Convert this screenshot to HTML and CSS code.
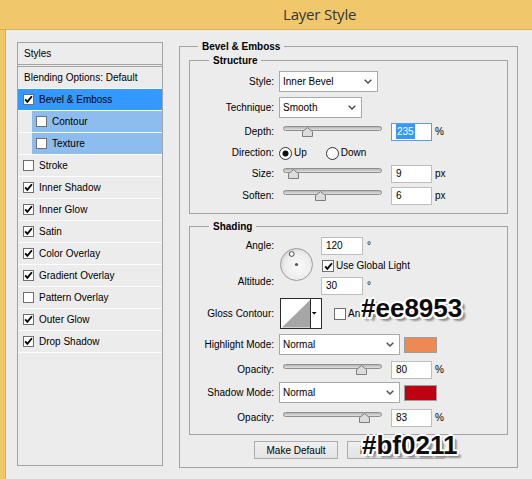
FILE: index.html
```html
<!DOCTYPE html>
<html lang="en">
<head>
<meta charset="utf-8">
<title>Layer Style</title>
<link rel="stylesheet" href="styles.css">
</head>
<body>
<header class="titlebar">Layer Style</header>
<div class="window">
  <nav class="styles-panel">
    <div class="sp-head">Styles</div>
    <div class="sp-row sp-blend">Blending Options: Default</div>
    <div class="sp-row sp-active"><span class="cb"><svg class="tick" viewBox="0 0 9 9"><path d="M1.2 4.4 3.4 6.9 7.9 1.2"/></svg></span>Bevel &amp; Emboss</div>
    <div class="sp-row sp-sub"><span class="cb"></span>Contour</div>
    <div class="sp-row sp-sub"><span class="cb"></span>Texture</div>
    <div class="sp-row"><span class="cb"></span>Stroke</div>
    <div class="sp-row"><span class="cb"><svg class="tick" viewBox="0 0 9 9"><path d="M1.2 4.4 3.4 6.9 7.9 1.2"/></svg></span>Inner Shadow</div>
    <div class="sp-row"><span class="cb"><svg class="tick" viewBox="0 0 9 9"><path d="M1.2 4.4 3.4 6.9 7.9 1.2"/></svg></span>Inner Glow</div>
    <div class="sp-row"><span class="cb"><svg class="tick" viewBox="0 0 9 9"><path d="M1.2 4.4 3.4 6.9 7.9 1.2"/></svg></span>Satin</div>
    <div class="sp-row"><span class="cb"><svg class="tick" viewBox="0 0 9 9"><path d="M1.2 4.4 3.4 6.9 7.9 1.2"/></svg></span>Color Overlay</div>
    <div class="sp-row"><span class="cb"><svg class="tick" viewBox="0 0 9 9"><path d="M1.2 4.4 3.4 6.9 7.9 1.2"/></svg></span>Gradient Overlay</div>
    <div class="sp-row"><span class="cb"></span>Pattern Overlay</div>
    <div class="sp-row"><span class="cb"><svg class="tick" viewBox="0 0 9 9"><path d="M1.2 4.4 3.4 6.9 7.9 1.2"/></svg></span>Outer Glow</div>
    <div class="sp-row"><span class="cb"><svg class="tick" viewBox="0 0 9 9"><path d="M1.2 4.4 3.4 6.9 7.9 1.2"/></svg></span>Drop Shadow</div>
  </nav>

  <main class="main">
    <fieldset class="group outer">
      <legend>Bevel &amp; Emboss</legend>

      <fieldset class="group inner structure">
        <legend>Structure</legend>
        <div class="row sel">
          <span class="lbl">Style:</span>
          <div class="select w-style"><span>Inner Bevel</span><svg class="chev" viewBox="0 0 8 5"><path d="M0.7 0.7 4 4 7.3 0.7"/></svg></div>
        </div>
        <div class="row sel gap5">
          <span class="lbl">Technique:</span>
          <div class="select w-tech"><span>Smooth</span><svg class="chev" viewBox="0 0 8 5"><path d="M0.7 0.7 4 4 7.3 0.7"/></svg></div>
        </div>
        <div class="row gap5">
          <span class="lbl">Depth:</span>
          <div class="slider"><span class="track"></span><svg class="thumb" style="left:19px" viewBox="0 0 11 10"><path d="M0.5 9.5V4.6L5.5 0.6 10.5 4.6V9.5Z"/></svg></div>
          <span class="input focus"><span class="selected">235</span></span>
          <span class="unit">%</span>
        </div>
        <div class="row gap3">
          <span class="lbl">Direction:</span>
          <span class="radio"><svg viewBox="0 0 13 13"><circle cx="6.5" cy="6.5" r="6" class="ring"/><circle cx="6.5" cy="6.5" r="3" class="dot"/></svg>Up</span>
          <span class="radio down"><svg viewBox="0 0 13 13"><circle cx="6.5" cy="6.5" r="6" class="ring"/></svg>Down</span>
        </div>
        <div class="row gap3">
          <span class="lbl">Size:</span>
          <div class="slider"><span class="track"></span><svg class="thumb" style="left:5px" viewBox="0 0 11 10"><path d="M0.5 9.5V4.6L5.5 0.6 10.5 4.6V9.5Z"/></svg></div>
          <span class="input">9</span>
          <span class="unit">px</span>
        </div>
        <div class="row gap4">
          <span class="lbl">Soften:</span>
          <div class="slider"><span class="track"></span><svg class="thumb" style="left:32px" viewBox="0 0 11 10"><path d="M0.5 9.5V4.6L5.5 0.6 10.5 4.6V9.5Z"/></svg></div>
          <span class="input">6</span>
          <span class="unit">px</span>
        </div>
      </fieldset>

      <fieldset class="group inner shading">
        <legend>Shading</legend>
        <div class="angle-block">
          <div class="lblcol">
            <span class="lbl">Angle:</span>
            <span class="lbl alt">Altitude:</span>
          </div>
          <svg class="dial" viewBox="0 0 33 33">
            <defs>
              <radialGradient id="dialfill" cx="55%" cy="55%" r="60%">
                <stop offset="0" stop-color="#fbfbfb"/>
                <stop offset="0.7" stop-color="#ececec"/>
                <stop offset="1" stop-color="#d4d4d4"/>
              </radialGradient>
            </defs>
            <circle cx="16.5" cy="16.5" r="16" fill="url(#dialfill)" stroke="#9c9c9c"/>
            <circle cx="16.5" cy="16.5" r="1.6" fill="#555"/>
            <circle cx="11.7" cy="6" r="2.4" fill="#fff" stroke="#3a3a3a" stroke-width="0.9"/>
          </svg>
          <div class="angle-right">
            <div class="row"><span class="input w-ang">120</span><span class="unit deg">°</span></div>
            <div class="check-row"><span class="cb big"><svg class="tick" viewBox="0 0 9 9"><path d="M1.2 4.4 3.4 6.9 7.9 1.2"/></svg></span>Use Global Light</div>
            <div class="row"><span class="input w-ang">30</span><span class="unit deg">°</span></div>
          </div>
        </div>
        <div class="row gloss gap3">
          <span class="lbl">Gloss Contour:</span>
          <svg class="contour" viewBox="0 0 42 31">
            <rect x="0.5" y="0.5" width="41" height="30" fill="#fff" stroke="#2b2b2b"/>
            <polygon points="2,29.5 30,2 30,29.5" fill="#a6a6a6"/>
            <line x1="30.5" y1="0" x2="30.5" y2="31" stroke="#2b2b2b"/>
            <polygon points="31.8,14 36.6,14 34.2,16.6" fill="#000"/>
          </svg>
          <span class="cb big anti"></span><span class="anti-text">Anti-aliased</span>
        </div>
        <div class="row sel gap5">
          <span class="lbl">Highlight Mode:</span>
          <div class="select w-mode"><span>Normal</span><svg class="chev" viewBox="0 0 8 5"><path d="M0.7 0.7 4 4 7.3 0.7"/></svg></div>
          <span class="swatch sw-hl"></span>
        </div>
        <div class="row gap6">
          <span class="lbl">Opacity:</span>
          <div class="slider"><span class="track"></span><svg class="thumb" style="left:73px" viewBox="0 0 11 10"><path d="M0.5 9.5V4.6L5.5 0.6 10.5 4.6V9.5Z"/></svg></div>
          <span class="input">80</span>
          <span class="unit">%</span>
        </div>
        <div class="row sel gap3">
          <span class="lbl">Shadow Mode:</span>
          <div class="select w-mode"><span>Normal</span><svg class="chev" viewBox="0 0 8 5"><path d="M0.7 0.7 4 4 7.3 0.7"/></svg></div>
          <span class="swatch sw-sh"></span>
        </div>
        <div class="row gap6">
          <span class="lbl">Opacity:</span>
          <div class="slider"><span class="track"></span><svg class="thumb" style="left:76px" viewBox="0 0 11 10"><path d="M0.5 9.5V4.6L5.5 0.6 10.5 4.6V9.5Z"/></svg></div>
          <span class="input">83</span>
          <span class="unit">%</span>
        </div>
      </fieldset>

      <div class="btn-row">
        <button class="btn btn-make">Make Default</button>
        <button class="btn btn-reset">Reset to Default</button>
      </div>
    </fieldset>
  </main>
</div>

<div class="tag tag-hl">#ee8953</div>
<div class="tag tag-sh">#bf0211</div>
</body>
</html>
```

FILE: styles.css
```css
* {
  box-sizing: border-box;
}

html,
body {
  margin: 0;
  padding: 0;
}

body {
  position: relative;
  width: 532px;
  height: 479px;
  overflow: hidden;
  background: #f0c76b;
  font-family: "Liberation Sans", Arial, sans-serif;
  font-size: 10px;
  line-height: 12px;
  color: #000;
}

/* ---------- title bar ---------- */
.titlebar {
  height: 30px;
  border-bottom: 1px solid #d9ad58;
  padding: 4px 0 0 283px;
  font-family: "Open Sans", "Noto Sans", sans-serif;
  font-size: 15px;
  line-height: 20px;
  letter-spacing: -0.2px;
  color: #363636;
}

/* ---------- dialog body ---------- */
.window {
  display: flex;
  align-items: flex-start;
  height: 449px;
  margin-left: 5px;
  padding: 10px 0 0 11px;
  border-left: 1px solid #d9ad58;
  background: #ececec;
}

/* ---------- styles list ---------- */
.styles-panel {
  flex: none;
  width: 146px;
  height: 424px;
  margin-top: 2px;
  border: 1px solid #a3a3a3;
}

.sp-head {
  height: 22px;
  padding-left: 6px;
  line-height: 21px;
  border-bottom: 1px solid #a3a3a3;
}

.sp-row {
  display: flex;
  align-items: center;
  height: 22px;
  padding-left: 5px;
  border-bottom: 1px solid #fdfdfd;
}

.sp-blend {
  height: 23px;
  margin-top: 1px;
  padding-left: 6px;
  border-top: 1px solid #a3a3a3;
}

.sp-active {
  background: #3399ff;
}

.sp-sub {
  padding-left: 18px;
  background: linear-gradient(to right, transparent 14px, #8dbdee 14px);
}

.cb {
  flex: none;
  display: flex;
  align-items: center;
  justify-content: center;
  width: 11px;
  height: 11px;
  margin-right: 5px;
  border: 1px solid #6f6f6f;
  background: #fff;
}

.cb.big {
  width: 12px;
  height: 12px;
}

.tick {
  width: 9px;
  height: 9px;
  overflow: visible;
}

.tick path {
  fill: none;
  stroke: #000;
  stroke-width: 1.8;
}

/* ---------- right side ---------- */
.main {
  flex: none;
  margin-left: 16px;
}

.group {
  min-width: 0;
  margin: 0;
  padding: 0;
  border: 1px solid #a3a3a3;
}

.group > legend {
  height: 13px;
  margin-left: 18px;
  padding: 0 4px;
  font-weight: bold;
  line-height: 13px;
}

.outer {
  width: 339px;
  padding-bottom: 8px;
}

.inner {
  margin: 0 9px;
}

.inner > legend {
  margin-left: 19px;
}

.structure {
  margin-top: 1px;
  padding: 4px 0 8px;
}

.shading {
  margin-top: 6px;
  padding: 4px 0 7px;
}

.row {
  display: flex;
  align-items: center;
  height: 18px;
}

.row.sel {
  height: 21px;
}

.row.gloss {
  height: 31px;
}

.gap3 { margin-top: 3px; }
.gap4 { margin-top: 4px; }
.gap5 { margin-top: 5px; }
.gap6 { margin-top: 6px; }

.lbl {
  flex: none;
  width: 84px;
  text-align: right;
  line-height: 12px;
}

/* dropdowns */
.select {
  display: flex;
  align-items: center;
  justify-content: space-between;
  height: 21px;
  margin-left: 5px;
  padding: 0 5px 0 3px;
  border: 1px solid #a9a9a9;
  background: #fff;
}

.w-style { width: 99px; }
.w-tech { width: 83px; }
.w-mode { width: 121px; }

.chev {
  width: 8px;
  height: 5px;
}

.chev path {
  fill: none;
  stroke: #4a4a4a;
  stroke-width: 1.4;
}

/* sliders */
.slider {
  position: relative;
  flex: none;
  width: 99px;
  height: 18px;
  margin-left: 9px;
}

.track {
  display: block;
  height: 5px;
  margin-top: 3px;
  border: 1px solid #8f8f8f;
  border-radius: 3px;
  background: linear-gradient(#b4b4b4, #e2e2e2);
}

.thumb {
  position: absolute;
  top: 4px;
  width: 11px;
  height: 10px;
}

.thumb path {
  fill: #dcdcdc;
  stroke: #7d7d7d;
  stroke-width: 1;
}

/* text inputs */
.input {
  display: block;
  flex: none;
  width: 41px;
  height: 18px;
  margin-left: 9px;
  padding-left: 4px;
  border: 1px solid #bdbdbd;
  background: #fff;
  line-height: 16px;
}

.input.focus {
  border-color: #5a9fe6;
}

.selected {
  padding: 2px 1px;
  background: #3399ff;
  color: #fff;
}

.unit {
  margin-left: 3px;
}

.unit.deg {
  margin-left: 4px;
}

/* radios */
.radio {
  display: flex;
  align-items: center;
  margin-left: 5px;
}

.radio.down {
  margin-left: 19px;
}

.radio svg {
  width: 13px;
  height: 13px;
  margin-right: 2px;
}

.radio .ring {
  fill: #fff;
  stroke: #333;
  stroke-width: 1;
}

.radio .dot {
  fill: #111;
}

/* angle / altitude */
.angle-block {
  display: flex;
  height: 58px;
}

.lblcol {
  display: flex;
  flex-direction: column;
  width: 84px;
}

.lblcol .lbl {
  height: 18px;
  line-height: 18px;
}

.lblcol .lbl.alt {
  margin-top: 18px;
}

.dial {
  flex: none;
  width: 33px;
  height: 33px;
  margin: 11px 0 0 6px;
}

.angle-right {
  margin-left: 8px;
}

.angle-right .input {
  margin-left: 0;
}

.input.w-ang {
  width: 42px;
}

.check-row {
  display: flex;
  align-items: center;
  height: 22px;
  padding-left: 1px;
}

.check-row .cb {
  margin-right: 2px;
}

/* gloss contour */
.contour {
  flex: none;
  width: 42px;
  height: 31px;
  margin-left: 6px;
}

.cb.anti {
  margin: 0 2px 0 12px;
}

.anti-text {
  white-space: nowrap;
}

/* swatches */
.swatch {
  flex: none;
  width: 33px;
  height: 16px;
  margin-left: 4px;
  border: 1px solid #9d9d9d;
}

.sw-hl { background: #ee8953; }
.sw-sh { background: #bf0211; }

/* buttons */
.btn-row {
  display: flex;
  margin: 6px 0 0 74px;
}

.btn {
  height: 18px;
  padding: 0;
  border: 1px solid #acacac;
  background: linear-gradient(#efefef, #e3e3e3);
  font-family: "Liberation Sans", Arial, sans-serif;
  font-size: 10px;
  color: #000;
}

.btn-make {
  width: 84px;
}

.btn-reset {
  width: 97px;
  margin-left: 9px;
}

/* colour annotations over the dialog */
.tag {
  position: absolute;
  font-family: "Liberation Sans", Arial, sans-serif;
  font-size: 26px;
  font-weight: bold;
  line-height: 26px;
  color: #0d0d0d;
  white-space: nowrap;
  text-shadow:
    2px 0 0 #fff, -2px 0 0 #fff, 0 2px 0 #fff, 0 -2px 0 #fff,
    1.5px 1.5px 0 #fff, -1.5px 1.5px 0 #fff, 1.5px -1.5px 0 #fff, -1.5px -1.5px 0 #fff,
    3px 3px 2px #8a8a8a, 4px 4px 2px #a0a0a0;
}

.tag-hl {
  left: 361px;
  top: 295px;
}

.tag-sh {
  left: 362px;
  top: 432px;
}
```
